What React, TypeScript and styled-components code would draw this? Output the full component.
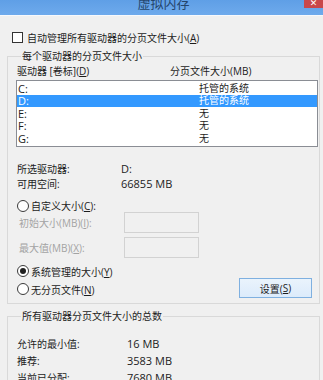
import styled, { createGlobalStyle } from "styled-components";

const GlobalStyle = createGlobalStyle`
  html, body {
    margin: 0;
    padding: 0;
    background: #f0f0f0;
  }
  * {
    box-sizing: border-box;
  }
`;

const drives = [
  { letter: "C:", size: "托管的系统" },
  { letter: "D:", size: "托管的系统" },
  { letter: "E:", size: "无" },
  { letter: "F:", size: "无" },
  { letter: "G:", size: "无" },
];

const totals = [
  { label: "允许的最小值:", value: "16 MB" },
  { label: "推荐:", value: "3583 MB" },
  { label: "当前已分配:", value: "7680 MB" },
];

export default function App() {
  return (
    <>
      <GlobalStyle />
      <Window>
        <TitleBar>
          <Title>虚拟内存</Title>
          <Close>✕</Close>
        </TitleBar>
        <Body>
          <CheckRow>
            <CheckBox />
            <span>
              自动管理所有驱动器的分页文件大小(<U>A</U>)
            </span>
          </CheckRow>

          <Group>
            <Legend>每个驱动器的分页文件大小</Legend>
            <HeaderRow>
              <span>
                驱动器 [卷标](<U>D</U>)
              </span>
              <span>分页文件大小(MB)</span>
            </HeaderRow>
            <ListBox>
              {drives.map((d) => (
                <DriveRow key={d.letter} $selected={d.letter === "D:"}>
                  <Latin>{d.letter}</Latin>
                  <span>{d.size}</span>
                </DriveRow>
              ))}
            </ListBox>

            <InfoList>
              <InfoRow>
                <span>所选驱动器:</span>
                <Latin>D:</Latin>
              </InfoRow>
              <InfoRow>
                <span>可用空间:</span>
                <Latin>66855 MB</Latin>
              </InfoRow>
            </InfoList>

            <RadioRow>
              <Radio />
              <span>
                自定义大小(<U>C</U>):
              </span>
            </RadioRow>
            <FieldRow>
              <FieldLabel>
                初始大小(MB)(<U>I</U>):
              </FieldLabel>
              <TextBox />
            </FieldRow>
            <FieldRow>
              <FieldLabel>
                最大值(MB)(<U>X</U>):
              </FieldLabel>
              <TextBox />
            </FieldRow>

            <BottomRow>
              <RadioList>
                <RadioRow>
                  <Radio $checked />
                  <span>
                    系统管理的大小(<U>Y</U>)
                  </span>
                </RadioRow>
                <RadioRow>
                  <Radio />
                  <span>
                    无分页文件(<U>N</U>)
                  </span>
                </RadioRow>
              </RadioList>
              <Button>
                设置(<U>S</U>)
              </Button>
            </BottomRow>
          </Group>

          <Group $last>
            <Legend>所有驱动器分页文件大小的总数</Legend>
            <TotalList>
              {totals.map((t) => (
                <TotalRow key={t.label}>
                  <span>{t.label}</span>
                  <Latin>{t.value}</Latin>
                </TotalRow>
              ))}
            </TotalList>
          </Group>
        </Body>
      </Window>
    </>
  );
}

const Window = styled.div`
  width: 323px;
  height: 380px;
  overflow: hidden;
  background: #f0f0f0;
  font-family: "Open Sans", "Noto Sans CJK SC", sans-serif;
  font-size: 10px;
  color: #1c1c1c;
`;

const TitleBar = styled.div`
  position: relative;
  height: 16px;
  display: flex;
  justify-content: center;
  overflow: hidden;
  background: linear-gradient(#5f9fe6, #6eaaec);
  border-bottom: 1px solid #f7f9fc;
`;

const Title = styled.div`
  margin-top: -4px;
  margin-left: 4px;
  font-size: 13px;
  line-height: 14px;
  color: #24456b;
`;

const Close = styled.div`
  position: absolute;
  top: 0;
  right: 0;
  width: 19px;
  height: 8px;
  display: flex;
  justify-content: center;
  align-items: flex-end;
  overflow: hidden;
  background: #c9474a;
  color: #ffffff;
  font-family: "DejaVu Sans", sans-serif;
  font-size: 9px;
  line-height: 9px;
`;

const Body = styled.div`
  padding: 14px 3px 0 7px;
`;

const U = styled.span`
  text-decoration: underline;
`;

const Latin = styled.span`
  font-size: 11px;
  line-height: 11px;
`;

const CheckRow = styled.div`
  display: flex;
  align-items: center;
  gap: 4px;
  height: 14px;
  margin-left: 5px;
`;

const CheckBox = styled.div`
  width: 11px;
  height: 11px;
  border: 1px solid #333333;
  background: #ffffff;
`;

const Group = styled.fieldset<{ $last?: boolean }>`
  margin: 6px 0 0;
  padding: 3px 0 ${(p) => (p.$last ? "40px" : "5px")} 8px;
  border: 1px solid #d9d9d9;
  min-width: 0;
`;

const Legend = styled.legend`
  margin-left: 5px;
  padding: 0 1px;
  font-size: 10px;
  line-height: 12px;
`;

const HeaderRow = styled.div`
  display: grid;
  grid-template-columns: 153px 1fr;
  height: 12px;
  line-height: 12px;
  padding-left: 1px;
  margin-bottom: 3px;
`;

const ListBox = styled.div`
  height: 67px;
  margin-right: 1px;
  padding: 1px 0;
  background: #ffffff;
  border: 1px solid #8a8d94;
`;

const DriveRow = styled.div<{ $selected?: boolean }>`
  display: grid;
  grid-template-columns: 181px 1fr;
  align-items: center;
  height: 12.5px;
  padding-left: 1px;
  line-height: 11px;
  overflow: hidden;
  background: ${(p) => (p.$selected ? "#3399ff" : "transparent")};
  color: ${(p) => (p.$selected ? "#ffffff" : "#1c1c1c")};
`;

const InfoList = styled.div`
  margin-top: 14px;
  padding-left: 1px;
`;

const InfoRow = styled.div`
  display: grid;
  grid-template-columns: 104px 1fr;
  align-items: center;
  height: 15px;
`;

const RadioRow = styled.div`
  display: flex;
  align-items: center;
  gap: 2px;
  height: 13px;
  margin-top: 8px;
  padding-left: 1px;
`;

const Radio = styled.div<{ $checked?: boolean }>`
  width: 12px;
  height: 12px;
  border: 1px solid #3a3a3a;
  border-radius: 50%;
  background: #ffffff;
  display: flex;
  align-items: center;
  justify-content: center;

  &::after {
    content: "";
    width: 6px;
    height: 6px;
    border-radius: 50%;
    background: ${(p) => (p.$checked ? "#1f1f1f" : "transparent")};
  }
`;

const FieldRow = styled.div`
  display: grid;
  grid-template-columns: 105px 75px;
  align-items: center;
  padding-left: 3px;
  margin-bottom: 4px;
`;

const FieldLabel = styled.span`
  color: #a3a3a3;
`;

const TextBox = styled.div`
  height: 21px;
  border: 1px solid #d2d2d2;
  background: #f0f0f0;
`;

const BottomRow = styled.div`
  display: flex;
  justify-content: space-between;
  align-items: flex-end;
  margin-top: 6px;
  padding-right: 7px;
`;

const RadioList = styled.div`
  display: flex;
  flex-direction: column;
  padding-bottom: 2px;

  & > div {
    height: 14px;
    margin-top: 4px;
  }
  & > div:first-child {
    margin-top: 0;
  }
`;

const Button = styled.div`
  width: 73px;
  height: 20px;
  display: flex;
  align-items: center;
  justify-content: center;
  border: 1px solid #7fb0e0;
  background: linear-gradient(#eaf3fc, #dcebfb);
`;

const TotalList = styled.div`
  padding: 10px 0 0 1px;
`;

const TotalRow = styled.div`
  display: grid;
  grid-template-columns: 110px 1fr;
  align-items: center;
  height: 17px;
`;
